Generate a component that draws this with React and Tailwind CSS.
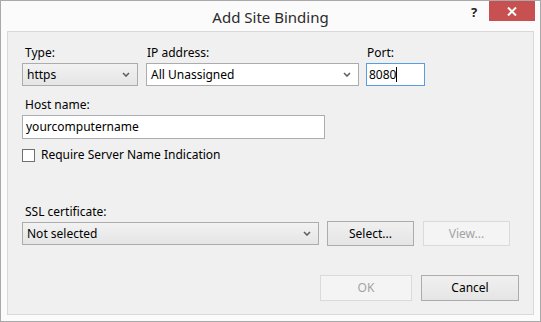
import React from 'react';

const font = { fontFamily: '"Noto Sans", "Open Sans", Arial, sans-serif' };

const Chevron = () => (
  <svg width="8" height="5" viewBox="0 0 8 5" className="shrink-0">
    <path d="M1 1 L4 4 L7 1" fill="none" stroke="#5f5f5f" strokeWidth="1.6" />
  </svg>
);

const Combo = ({ value, width, white }) => (
  <div
    className={`h-[23px] flex items-center justify-between pl-[4px] pr-[7px] border ${
      white ? 'bg-white border-[#acacac]' : 'bg-gradient-to-b from-[#f2f2f2] to-[#e5e5e5] border-[#acacac]'
    }`}
    style={{ width }}
  >
    <span className="text-[12px] text-black leading-none">{value}</span>
    <Chevron />
  </div>
);

const Button = ({ label, width, height = 25, disabled }) => (
  <div
    className={`flex items-center justify-center text-[12px] border ${
      disabled
        ? 'bg-[#f4f4f4] border-[#dadada] text-[#a3a3a3]'
        : 'bg-gradient-to-b from-[#f0f0f0] to-[#e5e5e5] border-[#acacac] text-black'
    }`}
    style={{ width, height }}
  >
    {label}
  </div>
);

const Label = ({ children, className = '' }) => (
  <div className={`text-[12px] leading-[16px] text-black ${className}`}>{children}</div>
);

export default function App() {
  return (
    <div style={font} className="w-[541px] h-[322px] bg-[#fbfbfb] border border-[#a9a9a9] flex flex-col">
      {/* title bar */}
      <div className="relative h-[30px] flex items-center justify-center">
        <span className="text-[15px] text-[#2b2b2b] mt-[2px]">Add Site Binding</span>
        <span className="absolute left-[470px] top-[2px] text-[13px] font-bold text-[#222]">?</span>
        <div className="absolute left-[488px] top-0 w-[46px] h-[20px] bg-[#c75050] flex items-center justify-center">
          <svg width="10" height="9" viewBox="0 0 10 9">
            <path d="M1 0.5 L9 8.5 M9 0.5 L1 8.5" stroke="#fff" strokeWidth="2" />
          </svg>
        </div>
      </div>

      {/* client area */}
      <div className="mx-[6px] h-[284px] bg-[#f0f0f0] border border-[#d9d9d9] pl-[14px] pt-[13px] flex flex-col">
        <div className="flex">
          <div className="w-[116px] mr-[8px]">
            <Label className="ml-[3px]">Type:</Label>
            <div className="mt-[2px]"><Combo value="https" width={116} /></div>
          </div>
          <div className="w-[213px] mr-[7px]">
            <Label className="ml-[1px]">IP address:</Label>
            <div className="mt-[2px]"><Combo value="All Unassigned" width={213} white /></div>
          </div>
          <div className="w-[59px]">
            <Label className="ml-[1px]">Port:</Label>
            <div className="mt-[2px] h-[23px] w-[59px] bg-white border border-[#569de5] flex items-center pl-[2px]">
              <span className="text-[12px] leading-none text-black">8080</span>
              <span className="w-[1px] h-[15px] bg-black" />
            </div>
          </div>
        </div>

        <Label className="ml-[3px] mt-[11px]">Host name:</Label>
        <div className="mt-[2px] h-[24px] w-[303px] bg-white border border-[#abadb3] flex items-center pl-[3px]">
          <span className="text-[12px] leading-none text-black">yourcomputername</span>
        </div>

        <div className="flex items-center mt-[8px]">
          <div className="w-[13px] h-[13px] bg-white border border-[#707070]" />
          <span className="ml-[6px] text-[12px] leading-[16px] text-black">Require Server Name Indication</span>
        </div>

        <Label className="ml-[3px] mt-[41px]">SSL certificate:</Label>
        <div className="flex items-center mt-[1px]">
          <Combo value="Not selected" width={297} />
          <div className="ml-[8px]"><Button label="Select..." width={87} /></div>
          <div className="ml-[9px]"><Button label="View..." width={87} disabled /></div>
        </div>

        <div className="flex mt-[29px] ml-[298px]">
          <Button label="OK" width={92} height={26} disabled />
          <div className="ml-[9px]"><Button label="Cancel" width={98} height={26} /></div>
        </div>
      </div>
    </div>
  );
}
